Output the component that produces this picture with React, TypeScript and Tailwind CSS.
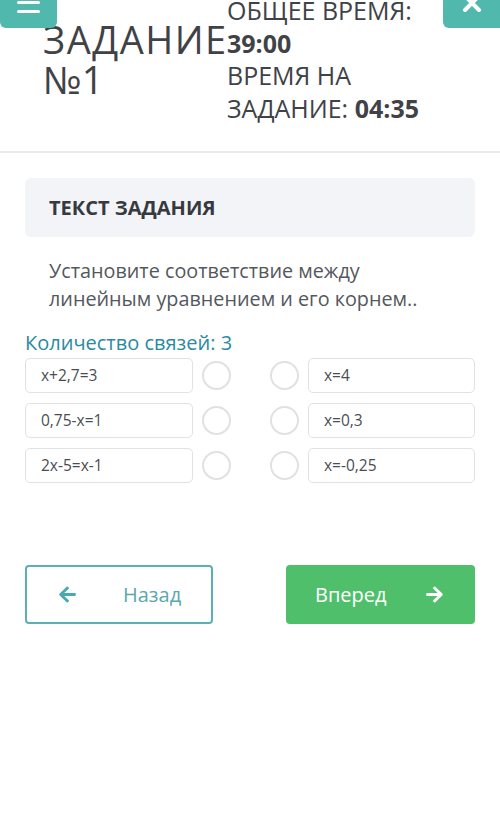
import React from 'react';
import { FaArrowLeft, FaArrowRight } from 'react-icons/fa';

const pairs = [
  { left: 'x+2,7=3', right: 'x=4' },
  { left: '0,75-x=1', right: 'x=0,3' },
  { left: '2x-5=x-1', right: 'x=-0,25' },
];

const App = () => {
  return (
    <div className="relative min-h-[833px] bg-white overflow-hidden font-['Open_Sans',sans-serif] text-[#3f4247]">
      {/* floating header buttons */}
      <div className="absolute left-0 top-0 z-10 flex h-[28px] w-[57px] flex-col items-center justify-start gap-[6px] rounded-b-[6px] bg-[#50b8ac] pt-[1px]">
        <span className="h-[3px] w-[23px] rounded bg-white" />
        <span className="h-[3px] w-[23px] rounded bg-white" />
      </div>
      <div className="absolute right-0 top-0 z-10 flex h-[28px] w-[57px] items-start justify-center rounded-bl-[6px] bg-[#50b8ac]">
        <svg width="20" height="14" viewBox="0 0 20 14">
          <path d="M3 -4 L17 10 M17 -4 L3 10" stroke="white" strokeWidth="4" strokeLinecap="round" />
        </svg>
      </div>

      <div className="-mt-[6px] flex items-center border-b-2 border-[#ececec] pb-[27px]">
        <div className="w-[227px] shrink-0 pl-[43px] text-[38px] leading-[40px] whitespace-nowrap">
          <span className="tracking-[1.5px]">ЗАДАНИЕ</span>
          <br />
          №1
        </div>
        <div className="text-[25px] leading-[32.5px]">
          <div>ОБЩЕЕ ВРЕМЯ:</div>
          <div className="font-bold">39:00</div>
          <div>ВРЕМЯ НА</div>
          <div>
            ЗАДАНИЕ: <span className="font-bold">04:35</span>
          </div>
        </div>
      </div>

      <div className="px-[25px] pt-[25px]">
        <div className="flex h-[59px] items-center rounded-[6px] bg-[#f3f4f7] px-[24px]">
          <span className="text-[20px] font-bold text-[#363a3f]">ТЕКСТ ЗАДАНИЯ</span>
        </div>

        <p className="mt-[20px] max-w-[410px] pl-[24px] text-[19.8px] leading-[28px] text-[#54585d]">
          Установите соответствие между линейным уравнением и его корнем..
        </p>

        <div className="mt-[18px] text-[20px] leading-[24px] text-[#2b8aa0]">Количество связей: 3</div>

        <div className="mt-[3px] flex flex-col gap-[10px]">
          {pairs.map((p, i) => (
            <div key={i} className="flex items-center">
              <div className="flex h-[35px] w-[168px] items-center rounded-[5px] border border-[#e2e2e2] px-[15px] text-[15.5px] text-[#4a4d52]">
                {p.left}
              </div>
              <div className="ml-[9px] h-[29px] w-[29px] rounded-full border-2 border-[#e1e1e1]" />
              <div className="ml-[39px] h-[29px] w-[29px] rounded-full border-2 border-[#e1e1e1]" />
              <div className="ml-[9px] flex h-[35px] flex-1 items-center rounded-[5px] border border-[#e2e2e2] px-[15px] text-[15.5px] text-[#4a4d52]">
                {p.right}
              </div>
            </div>
          ))}
        </div>

        <div className="mt-[82px] flex justify-between">
          <button className="flex h-[59px] w-[188px] items-center rounded-[4px] border-2 border-[#5bb0b3] pl-[31px] text-[20px] text-[#5aa7aa]">
            <FaArrowLeft className="h-[19px] w-[19px] text-[#4aa9ae]" />
            <span className="ml-[46px]">Назад</span>
          </button>
          <button className="flex h-[59px] w-[189px] items-center justify-between rounded-[4px] bg-[#4fbf6b] pl-[29px] pr-[31px] text-[20px] text-white">
            <span>Вперед</span>
            <FaArrowRight className="h-[19px] w-[19px]" />
          </button>
        </div>
      </div>
    </div>
  );
};

export default App;
